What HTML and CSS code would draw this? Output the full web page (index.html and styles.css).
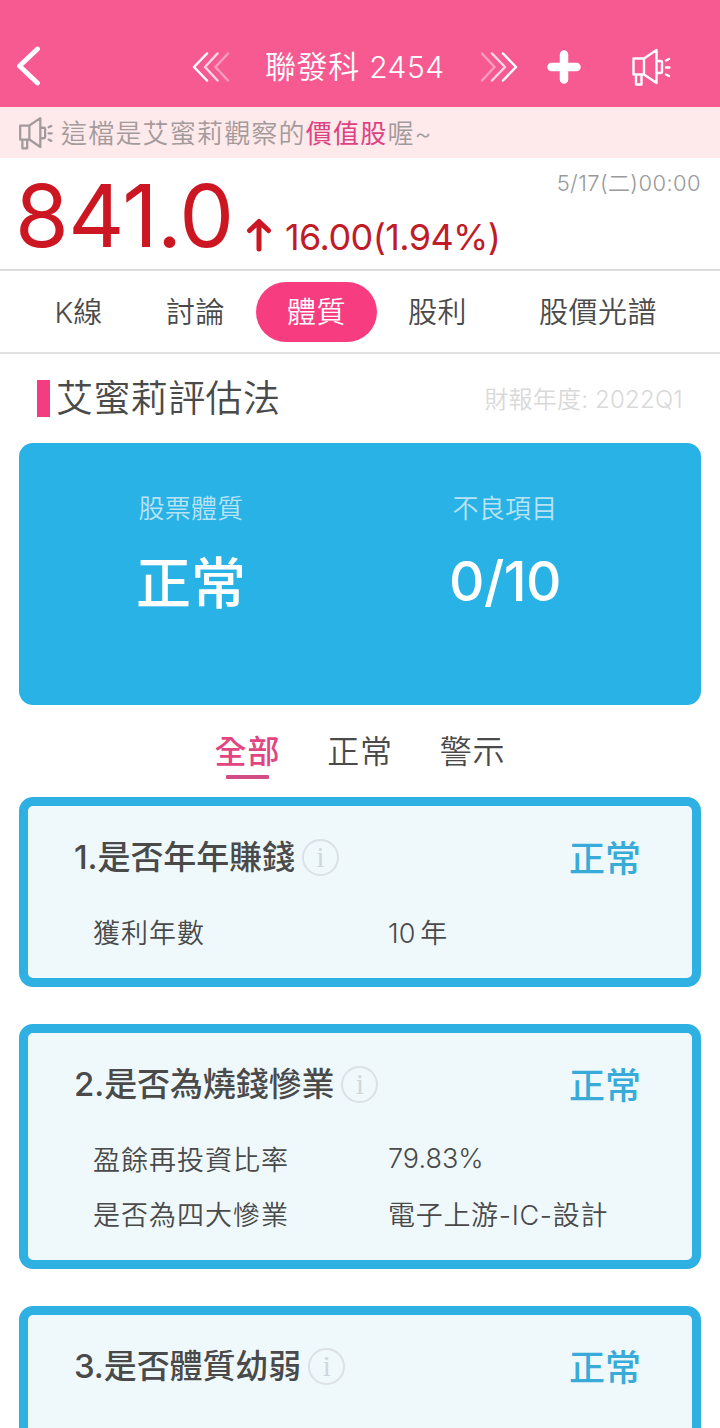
FILE: index.html
```html
<!DOCTYPE html>
<html lang="zh-Hant">

<head>
    <meta charset="UTF-8">
    <meta name="viewport" content="width=device-width, initial-scale=1.0">
    <title>聯發科 2454</title>
    <link rel="stylesheet" href="styles.css">
</head>

<body>
    <div class="app">
        <header class="header">
            <svg class="back" viewBox="0 0 26 40" width="26" height="40">
                <path d="M22.500 3 L4.500 20 L22.500 37" />
            </svg>
            <svg class="prev" viewBox="0 0 38 30" width="38" height="30">
                <path d="M15 1.500 L2 15 L15 28.500" />
                <path opacity=".75" d="M25.500 1.500 L13 15 L25.500 28.500" />
                <path opacity=".4" d="M36 1.500 L23.500 15 L36 28.500" />
            </svg>
            <h1 class="stock-name">聯發科 <span class="code">2454</span></h1>
            <svg class="next" viewBox="0 0 38 30" width="38" height="30">
                <path opacity=".4" d="M2 1.500 L14.500 15 L2 28.500" />
                <path opacity=".75" d="M12 1.500 L25 15 L12 28.500" />
                <path d="M23 1.500 L36 15 L23 28.500" />
            </svg>
            <svg class="plus" viewBox="0 0 34 34" width="34" height="34">
                <path d="M17 4.500 V29.500 M4.500 17 H29.500" />
            </svg>
            <svg class="horn" viewBox="0 0 40 40" width="40" height="40">
                <path d="M13 11.500 H2.500 V27.500 H13 Z M13 11.500 L25.500 3 V36 L13 27.500 M25.500 14 H29.500 Q31 14 31 15.500 V24.500 Q31 26 29.500 26 H25.500 M5 27.500 V37.500 H10.500 V27.500 M35 13.500 L38 12 M35 20.500 H38.500 M35 27.500 L38 29" />
            </svg>
        </header>

        <div class="notice">
            <svg class="horn" viewBox="0 0 40 40" width="35" height="36">
                <path d="M13 11.500 H2.500 V27.500 H13 Z M13 11.500 L25.500 3 V36 L13 27.500 M25.500 14 H29.500 Q31 14 31 15.500 V24.500 Q31 26 29.500 26 H25.500 M5 27.500 V37.500 H10.500 V27.500 M35 13.500 L38 12 M35 20.500 H38.500 M35 27.500 L38 29" />
            </svg>
            <p class="notice-text">這檔是艾蜜莉觀察的<span class="pink">價值股</span>喔~</p>
        </div>

        <div class="price">
            <span class="price-value">841.0</span>
            <svg class="price-arrow" viewBox="0 0 26 34" width="26" height="34">
                <path d="M13 31 V4 M3.500 12.500 L13 3.500 L22.500 12.500" />
            </svg>
            <span class="price-change">16.00(1.94%)</span>
            <span class="price-time">5/17(二)00:00</span>
        </div>

        <nav class="tabs">
            <a class="tab tab-k">K線</a>
            <a class="tab">討論</a>
            <a class="tab active">體質</a>
            <a class="tab">股利</a>
            <a class="tab tab-wide">股價光譜</a>
        </nav>

        <div class="section-title">
            <h2>艾蜜莉評估法</h2>
            <span class="season">財報年度: 2022Q1</span>
        </div>

        <div class="summary">
            <div class="summary-item">
                <span class="summary-label">股票體質</span>
                <span class="summary-value">正常</span>
            </div>
            <div class="summary-item">
                <span class="summary-label">不良項目</span>
                <span class="summary-value score">0/10</span>
            </div>
        </div>

        <div class="filters">
            <a class="filter selected">全部</a>
            <a class="filter">正常</a>
            <a class="filter">警示</a>
        </div>

        <div class="card">
            <div class="card-head">
                <h3>1.是否年年賺錢</h3>
                <span class="info">i</span>
                <span class="status">正常</span>
            </div>
            <div class="row"><span class="row-name">獲利年數</span><span class="years">10<span class="unit">年</span></span></div>
        </div>

        <div class="card">
            <div class="card-head">
                <h3>2.是否為燒錢慘業</h3>
                <span class="info">i</span>
                <span class="status">正常</span>
            </div>
            <div class="row"><span class="row-name">盈餘再投資比率</span><span class="percent">79.83%</span></div>
            <div class="row"><span class="row-name">是否為四大慘業</span><span class="industry">電子上游-IC-設計</span></div>
        </div>

        <div class="card">
            <div class="card-head">
                <h3>3.是否體質幼弱</h3>
                <span class="info">i</span>
                <span class="status">正常</span>
            </div>
            <div class="row"></div>
        </div>
    </div>
</body>

</html>
```
FILE: styles.css
```css
* {
    box-sizing: border-box;
}

body {
    margin: 0;
    background-color: #fff;
    color: #4a4a4a;
    font-family: Inter, "Noto Sans CJK TC", sans-serif;
    font-weight: 350;
}

h1, h2, h3, p {
    margin: 0;
    font-weight: 350;
}

svg {
    flex-shrink: 0;
    fill: none;
    stroke-linecap: round;
    stroke-linejoin: round;
}

.app {
    width: 720px;
    height: 1428px;
    overflow: hidden;
}

/* header */
.header {
    height: 107px;
    padding: 26px 0 0 15px;
    display: flex;
    align-items: center;
    background-color: #f65a91;
    color: #fff;
    stroke: #fff;
}

.back {
    margin-top: -2px;
    stroke-width: 4.8;
}

.prev, .next {
    stroke-width: 2.5;
}

.prev {
    margin-left: 151px;
}

.stock-name {
    margin-left: 35px;
    width: 179px;
    font-size: 31px;
    line-height: 42px;
    letter-spacing: 0.6px;
    white-space: nowrap;
    stroke: none;
}

.code {
    font-size: 30px;
    letter-spacing: 0.5px;
}

.next {
    margin-left: 36px;
}

.plus {
    margin-left: 29px;
    stroke-width: 8.5;
}

.header .horn {
    margin-left: 50px;
    stroke-width: 2.4;
}

/* notice */
.notice {
    height: 51px;
    padding-left: 18px;
    display: flex;
    align-items: center;
    background-color: #fee9eb;
    color: #a39a9b;
}

.notice .horn {
    stroke: #a39a9b;
    stroke-width: 2.6;
}

.notice-text {
    margin-left: 8px;
    padding-top: 2px;
    font-size: 26px;
    line-height: 49px;
    letter-spacing: 1.2px;
}

.pink {
    color: #dc4282;
    font-weight: 400;
}

/* price */
.price {
    height: 113px;
    padding: 0 19px 0 15px;
    display: flex;
    align-items: flex-start;
    border-bottom: 2px solid #dcdcdc;
    color: #cc1622;
    font-weight: 400;
}

.price-value {
    width: 218px;
    font-size: 87px;
    line-height: 115px;
    letter-spacing: -0.6px;
}

.price-arrow {
    margin: 60px 0 0 13px;
    stroke: #cc1622;
    stroke-width: 5;
}

.price-change {
    margin-left: 13px;
    font-size: 36px;
    line-height: 158px;
    letter-spacing: -0.6px;
    color: #c01c28;
}

.price-time {
    margin-left: auto;
    font-size: 22px;
    line-height: 50px;
    letter-spacing: 0.4px;
    color: #999;
    font-weight: 350;
}

/* tabs */
.tabs {
    height: 83px;
    padding-left: 46px;
    display: flex;
    align-items: center;
    border-bottom: 2px solid #e0e0e0;
}

.tab {
    width: 121px;
    height: 60px;
    border-radius: 30px;
    font-size: 29px;
    line-height: 62px;
    letter-spacing: 0.5px;
    text-align: center;
}

.tab-k {
    width: 65px;
    margin-right: 24px;
    letter-spacing: 0;
}

.tab-wide {
    width: 200px;
}

.active {
    background-color: #f73c80;
    color: #fff;
}

/* section title */
.section-title {
    height: 89px;
    padding: 0 37px;
    display: flex;
    align-items: center;
    justify-content: space-between;
}

.section-title h2 {
    border-left: 13px solid #f43d81;
    padding-left: 6px;
    font-size: 37px;
    line-height: 37px;
    letter-spacing: 0.4px;
}

.season {
    margin-top: -3px;
    font-size: 24px;
    letter-spacing: 0.2px;
    color: #d9d9d9;
}

/* summary */
.summary {
    height: 262px;
    margin: 0 19px;
    padding: 45px 0 0 15px;
    display: flex;
    border-radius: 14px;
    background-color: #28b2e5;
    color: #fff;
}

.summary-item {
    width: 314px;
    display: flex;
    flex-direction: column;
    align-items: center;
}

.summary-label {
    font-size: 26px;
    line-height: 41px;
    letter-spacing: 0.2px;
    color: #b9e3f5;
}

.summary-value {
    margin-top: 7px;
    font-size: 55px;
    font-weight: 500;
    line-height: 94px;
}

.score {
    line-height: 91px;
    letter-spacing: -0.5px;
}

/* filters */
.filters {
    height: 92px;
    display: flex;
    justify-content: center;
    gap: 47px;
    padding-top: 24px;
}

.filter {
    font-size: 32px;
    line-height: 46px;
    letter-spacing: 0.8px;
}

.selected {
    color: #e2457f;
    font-weight: 500;
}

.selected::after {
    content: "";
    display: block;
    width: 43px;
    height: 4px;
    margin: 0 auto;
    border-radius: 1px;
    background-color: #d24c85;
}

/* cards */
.card {
    margin: 0 19px 37px;
    padding: 25px 51px 19px 46px;
    border: 9px solid #2fb0e2;
    border-radius: 14px;
    background-color: #eff9fc;
}

.card-head {
    height: 52px;
    margin-bottom: 21px;
    display: flex;
    align-items: center;
}

.card-head h3 {
    font-size: 33px;
    line-height: 50px;
    font-weight: 500;
    letter-spacing: -0.1px;
}

.info {
    width: 37px;
    height: 37px;
    margin-left: 7px;
    border: 2px solid #dbe1e4;
    border-radius: 50%;
    font-family: "Liberation Serif", serif;
    font-size: 29px;
    line-height: 32px;
    text-align: center;
    color: #d0d6d9;
}

.status {
    margin: -3px 0 0 auto;
    font-size: 36px;
    font-weight: 500;
    color: #39abd9;
}

.row {
    height: 55px;
    padding-left: 19px;
    display: flex;
    align-items: center;
    font-size: 27px;
    letter-spacing: 1px;
}

.row-name {
    width: 295px;
}

.years {
    letter-spacing: 0;
}

.percent {
    letter-spacing: 0;
}

.industry {
    letter-spacing: 0.7px;
}

.unit {
    margin-left: 5px;
}
```
